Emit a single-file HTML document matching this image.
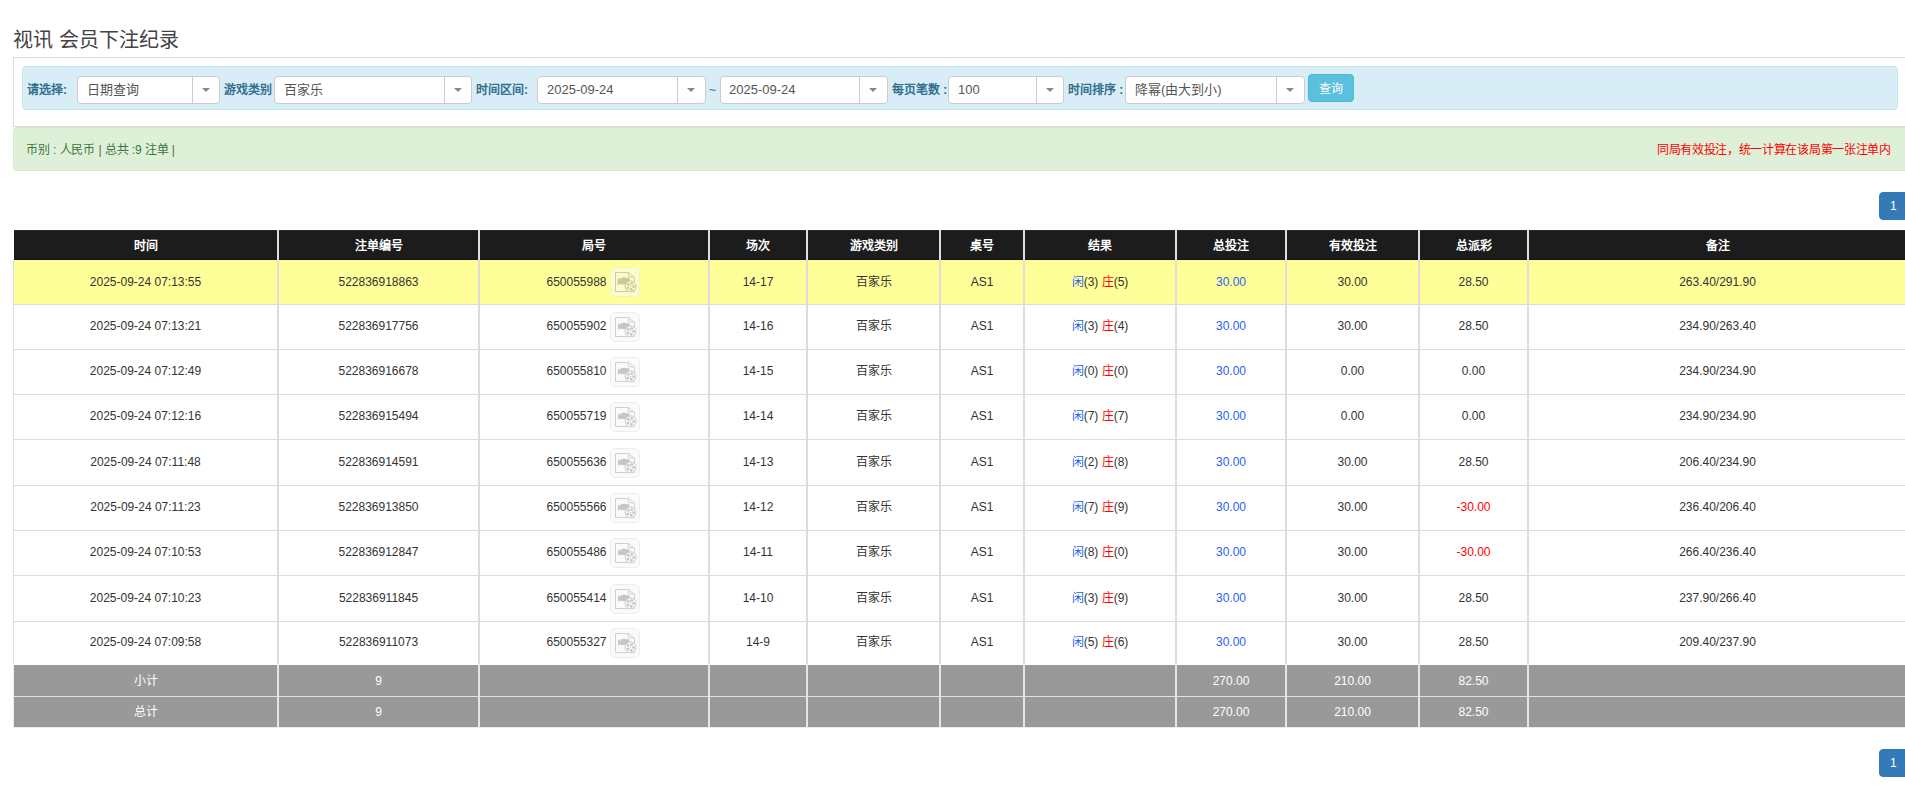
<!DOCTYPE html>
<html lang="zh-CN"><head><meta charset="utf-8"><title>视讯 会员下注纪录</title>
<style>
*{box-sizing:border-box;margin:0;padding:0}
html,body{width:1905px;height:805px;overflow:hidden;background:#fff}
body{font-family:"Liberation Sans",sans-serif;color:#333;font-size:12px;position:relative}
.title{position:absolute;left:13px;top:27px;font-size:20px;line-height:26px;color:#444;white-space:nowrap}
.outer{position:absolute;left:13px;top:57px;width:1910px;height:70px;border:1px solid #ddd}
.info{position:absolute;left:22px;top:66px;width:1876px;height:44px;background:#d9edf7;border:1px solid #bce8f1;border-radius:4px}
.lbl{position:absolute;top:81px;font-size:12px;line-height:18px;font-weight:bold;color:#31708f;white-space:nowrap}
.sel{position:absolute;top:76px;height:28px;background:#fff;border:1px solid #ccc;border-radius:4px}
.st{position:absolute;left:9px;top:4px;font-size:13px;line-height:18px;color:#555;white-space:nowrap}
.sep{position:absolute;top:0;bottom:0;width:1px;background:#ccc}
.arr{position:absolute;top:11px;width:0;height:0;border-left:4px solid transparent;border-right:4px solid transparent;border-top:4px solid #888}
.btn{position:absolute;left:1308px;top:74px;width:46px;height:28px;background:#5bc0de;border:1px solid #46b8da;border-radius:4px;color:#fff;font-size:12px;line-height:28px;text-align:center}
.alert{position:absolute;left:13px;top:127px;width:1910px;height:44px;background:#dff0d8;border:1px solid #d6e9c6;border-radius:4px}
.al{position:absolute;left:26px;top:142px;font-size:12px;letter-spacing:-0.1px;line-height:16px;color:#3c763d;white-space:nowrap}
.ar{position:absolute;right:15px;top:142px;font-size:12px;letter-spacing:-0.32px;line-height:16px;color:#f00;white-space:nowrap}
.pg{position:absolute;left:1879px;width:30px;height:28px;background:#337ab7;border:1px solid #337ab7;border-radius:4px;color:#fff;font-weight:normal;font-size:12px;line-height:26px;padding-left:10px}
table{position:absolute;left:13px;top:230px;border-collapse:separate;border-spacing:0;table-layout:fixed;width:1894px}
th,td{text-align:center;border-left:1px solid #ddd;border-right:1px solid #ddd;white-space:nowrap;padding:0}
th{background:#1c1c1c;color:#fff;font-weight:bold;height:30px;font-size:12px;line-height:14px;padding-top:2px;border-left-color:#ddd;border-right-color:#ddd}
th:first-child{border-left-color:#fff}
th{box-shadow:inset 0 1px 0 #292929,inset 0 -1px 0 #121216}
td{border-bottom:1px solid #ddd;font-size:12px;color:#333;line-height:14px}
tr.hl td{background:#ffff99}
tbody tr:not(.hl):not(.sum) td{padding-bottom:2px}
.blue{color:#1f5ff5}
.red{color:#f00}
.jw{display:inline-flex;align-items:center;vertical-align:middle;position:relative;left:-1px}
.ico{display:block;margin-left:3px;position:relative;top:1px}
tr.hl .ico{top:0}
.bx{fill:#fafafa;stroke:#ededed}
.ig path{stroke:#d0d0d0}
.ig .cam,.ig g.cam circle{fill:#c6c6c6;stroke:none}
.rl{fill:#f9f9f9;stroke:#cdcdcd}
tr.hl .bx{fill:#fbfbd0;stroke:#f4f3bd}
tr.hl .ig path{stroke:#cfcd9c}
tr.hl .ig .cam,tr.hl .ig g.cam circle{fill:#c9c896}
tr.hl .rl{fill:#fafacd;stroke:#cccb98}
.cj{}
tr.sum td{background:#999;color:#fff;font-weight:normal;border-bottom:1px solid #e2e2e2;border-left-color:#e5e5e5;border-right-color:#e5e5e5}
tr.sum.last td{border-bottom-color:#ececec}
tr.sum td:first-child{border-left-color:#eee}
tr.r9 td{border-bottom-color:#fff}
</style></head><body>
<div class="title">视讯 会员下注纪录</div>
<div class="outer"></div>
<div class="info"></div>
<div class="lbl" style="left:27px">请选择:</div>
<div class="sel" style="left:77px;width:143px"><span class="st" style="left:9px">日期查询</span><span class="sep" style="left:114px"></span><span class="arr" style="left:124px"></span></div>
<div class="lbl" style="left:224px">游戏类别</div>
<div class="sel" style="left:274px;width:198px"><span class="st" style="left:9px">百家乐</span><span class="sep" style="left:169px"></span><span class="arr" style="left:179px"></span></div>
<div class="lbl" style="left:476px">时间区间:</div>
<div class="sel" style="left:537px;width:169px"><span class="st" style="left:9px">2025-09-24</span><span class="sep" style="left:139px"></span><span class="arr" style="left:149px"></span></div>
<div class="lbl" style="left:709px;font-weight:normal;color:#31708f">~</div>
<div class="sel" style="left:720px;width:168px"><span class="st" style="left:8px">2025-09-24</span><span class="sep" style="left:138px"></span><span class="arr" style="left:148px"></span></div>
<div class="lbl" style="left:892px">每页笔数 :</div>
<div class="sel" style="left:948px;width:116px"><span class="st" style="left:9px">100</span><span class="sep" style="left:87px"></span><span class="arr" style="left:97px"></span></div>
<div class="lbl" style="left:1068px">时间排序 :</div>
<div class="sel" style="left:1125px;width:180px"><span class="st" style="left:9px">降幂(由大到小)</span><span class="sep" style="left:150px"></span><span class="arr" style="left:160px"></span></div>
<div class="btn">查询</div>
<div class="alert"></div>
<div class="al">币别 : 人民币 | 总共 :9 注单 |</div>
<div class="ar" style="right:auto;left:1657px">同局有效投注，统一计算在该局第一张注单内</div>
<div class="pg" style="top:192px">1</div>
<table>
<colgroup><col style="width:265px"><col style="width:201px"><col style="width:230px"><col style="width:98px"><col style="width:133px"><col style="width:84px"><col style="width:152px"><col style="width:110px"><col style="width:133px"><col style="width:109px"><col style="width:379px"></colgroup>
<thead><tr><th>时间</th><th>注单编号</th><th>局号</th><th>场次</th><th>游戏类别</th><th>桌号</th><th>结果</th><th>总投注</th><th>有效投注</th><th>总派彩</th><th>备注</th></tr></thead>
<tbody>
<tr class="hl" style="height:45px"><td>2025-09-24 07:13:55</td><td>522836918863</td><td class="jh"><span class="jw"><span>650055988</span><svg class="ico" width="30" height="30" viewBox="0 0 30 30"><rect class="bx" x="0.5" y="0.5" width="29" height="29" rx="4.5"/><g class="ig"><path d="M5.5 5.5H18.3L24.5 10.5V24.5H5.5Z" fill="none" stroke-width="1"/><path d="M18.3 5.5V9.8H24.5" fill="none" stroke-width="1"/><path class="cam" d="M8 11.6L10.4 13V11.3H12.2L12.7 10.7H15.2L15.7 11.3H19.4V17H10.4V15.9L8 17.8Z"/><circle class="rl" cx="20.6" cy="19.4" r="5.5" stroke-width="1"/><g class="cam"><circle cx="18.23" cy="17.41" r="1.4"/><circle cx="21.76" cy="16.53" r="1.4"/><circle cx="23.69" cy="19.62" r="1.4"/><circle cx="21.35" cy="22.41" r="1.4"/><circle cx="17.97" cy="21.04" r="1.4"/><circle cx="20.4" cy="19.4" r="0.7"/></g></g></svg></span></td><td>14-17</td><td><span class="cj">百家乐</span></td><td>AS1</td><td><span class="blue">闲</span>(3) <span class="red">庄</span>(5)</td><td class="blue">30.00</td><td>30.00</td><td>28.50</td><td>263.40/291.90</td></tr>
<tr style="height:45px"><td>2025-09-24 07:13:21</td><td>522836917756</td><td class="jh"><span class="jw"><span>650055902</span><svg class="ico" width="30" height="30" viewBox="0 0 30 30"><rect class="bx" x="0.5" y="0.5" width="29" height="29" rx="4.5"/><g class="ig"><path d="M5.5 5.5H18.3L24.5 10.5V24.5H5.5Z" fill="none" stroke-width="1"/><path d="M18.3 5.5V9.8H24.5" fill="none" stroke-width="1"/><path class="cam" d="M8 11.6L10.4 13V11.3H12.2L12.7 10.7H15.2L15.7 11.3H19.4V17H10.4V15.9L8 17.8Z"/><circle class="rl" cx="20.6" cy="19.4" r="5.5" stroke-width="1"/><g class="cam"><circle cx="18.23" cy="17.41" r="1.4"/><circle cx="21.76" cy="16.53" r="1.4"/><circle cx="23.69" cy="19.62" r="1.4"/><circle cx="21.35" cy="22.41" r="1.4"/><circle cx="17.97" cy="21.04" r="1.4"/><circle cx="20.4" cy="19.4" r="0.7"/></g></g></svg></span></td><td>14-16</td><td><span class="cj">百家乐</span></td><td>AS1</td><td><span class="blue">闲</span>(3) <span class="red">庄</span>(4)</td><td class="blue">30.00</td><td>30.00</td><td>28.50</td><td>234.90/263.40</td></tr>
<tr style="height:45px"><td>2025-09-24 07:12:49</td><td>522836916678</td><td class="jh"><span class="jw"><span>650055810</span><svg class="ico" width="30" height="30" viewBox="0 0 30 30"><rect class="bx" x="0.5" y="0.5" width="29" height="29" rx="4.5"/><g class="ig"><path d="M5.5 5.5H18.3L24.5 10.5V24.5H5.5Z" fill="none" stroke-width="1"/><path d="M18.3 5.5V9.8H24.5" fill="none" stroke-width="1"/><path class="cam" d="M8 11.6L10.4 13V11.3H12.2L12.7 10.7H15.2L15.7 11.3H19.4V17H10.4V15.9L8 17.8Z"/><circle class="rl" cx="20.6" cy="19.4" r="5.5" stroke-width="1"/><g class="cam"><circle cx="18.23" cy="17.41" r="1.4"/><circle cx="21.76" cy="16.53" r="1.4"/><circle cx="23.69" cy="19.62" r="1.4"/><circle cx="21.35" cy="22.41" r="1.4"/><circle cx="17.97" cy="21.04" r="1.4"/><circle cx="20.4" cy="19.4" r="0.7"/></g></g></svg></span></td><td>14-15</td><td><span class="cj">百家乐</span></td><td>AS1</td><td><span class="blue">闲</span>(0) <span class="red">庄</span>(0)</td><td class="blue">30.00</td><td>0.00</td><td>0.00</td><td>234.90/234.90</td></tr>
<tr style="height:45px"><td>2025-09-24 07:12:16</td><td>522836915494</td><td class="jh"><span class="jw"><span>650055719</span><svg class="ico" width="30" height="30" viewBox="0 0 30 30"><rect class="bx" x="0.5" y="0.5" width="29" height="29" rx="4.5"/><g class="ig"><path d="M5.5 5.5H18.3L24.5 10.5V24.5H5.5Z" fill="none" stroke-width="1"/><path d="M18.3 5.5V9.8H24.5" fill="none" stroke-width="1"/><path class="cam" d="M8 11.6L10.4 13V11.3H12.2L12.7 10.7H15.2L15.7 11.3H19.4V17H10.4V15.9L8 17.8Z"/><circle class="rl" cx="20.6" cy="19.4" r="5.5" stroke-width="1"/><g class="cam"><circle cx="18.23" cy="17.41" r="1.4"/><circle cx="21.76" cy="16.53" r="1.4"/><circle cx="23.69" cy="19.62" r="1.4"/><circle cx="21.35" cy="22.41" r="1.4"/><circle cx="17.97" cy="21.04" r="1.4"/><circle cx="20.4" cy="19.4" r="0.7"/></g></g></svg></span></td><td>14-14</td><td><span class="cj">百家乐</span></td><td>AS1</td><td><span class="blue">闲</span>(7) <span class="red">庄</span>(7)</td><td class="blue">30.00</td><td>0.00</td><td>0.00</td><td>234.90/234.90</td></tr>
<tr style="height:46px"><td>2025-09-24 07:11:48</td><td>522836914591</td><td class="jh"><span class="jw"><span>650055636</span><svg class="ico" width="30" height="30" viewBox="0 0 30 30"><rect class="bx" x="0.5" y="0.5" width="29" height="29" rx="4.5"/><g class="ig"><path d="M5.5 5.5H18.3L24.5 10.5V24.5H5.5Z" fill="none" stroke-width="1"/><path d="M18.3 5.5V9.8H24.5" fill="none" stroke-width="1"/><path class="cam" d="M8 11.6L10.4 13V11.3H12.2L12.7 10.7H15.2L15.7 11.3H19.4V17H10.4V15.9L8 17.8Z"/><circle class="rl" cx="20.6" cy="19.4" r="5.5" stroke-width="1"/><g class="cam"><circle cx="18.23" cy="17.41" r="1.4"/><circle cx="21.76" cy="16.53" r="1.4"/><circle cx="23.69" cy="19.62" r="1.4"/><circle cx="21.35" cy="22.41" r="1.4"/><circle cx="17.97" cy="21.04" r="1.4"/><circle cx="20.4" cy="19.4" r="0.7"/></g></g></svg></span></td><td>14-13</td><td><span class="cj">百家乐</span></td><td>AS1</td><td><span class="blue">闲</span>(2) <span class="red">庄</span>(8)</td><td class="blue">30.00</td><td>30.00</td><td>28.50</td><td>206.40/234.90</td></tr>
<tr style="height:45px"><td>2025-09-24 07:11:23</td><td>522836913850</td><td class="jh"><span class="jw"><span>650055566</span><svg class="ico" width="30" height="30" viewBox="0 0 30 30"><rect class="bx" x="0.5" y="0.5" width="29" height="29" rx="4.5"/><g class="ig"><path d="M5.5 5.5H18.3L24.5 10.5V24.5H5.5Z" fill="none" stroke-width="1"/><path d="M18.3 5.5V9.8H24.5" fill="none" stroke-width="1"/><path class="cam" d="M8 11.6L10.4 13V11.3H12.2L12.7 10.7H15.2L15.7 11.3H19.4V17H10.4V15.9L8 17.8Z"/><circle class="rl" cx="20.6" cy="19.4" r="5.5" stroke-width="1"/><g class="cam"><circle cx="18.23" cy="17.41" r="1.4"/><circle cx="21.76" cy="16.53" r="1.4"/><circle cx="23.69" cy="19.62" r="1.4"/><circle cx="21.35" cy="22.41" r="1.4"/><circle cx="17.97" cy="21.04" r="1.4"/><circle cx="20.4" cy="19.4" r="0.7"/></g></g></svg></span></td><td>14-12</td><td><span class="cj">百家乐</span></td><td>AS1</td><td><span class="blue">闲</span>(7) <span class="red">庄</span>(9)</td><td class="blue">30.00</td><td>30.00</td><td class="red">-30.00</td><td>236.40/206.40</td></tr>
<tr style="height:45px"><td>2025-09-24 07:10:53</td><td>522836912847</td><td class="jh"><span class="jw"><span>650055486</span><svg class="ico" width="30" height="30" viewBox="0 0 30 30"><rect class="bx" x="0.5" y="0.5" width="29" height="29" rx="4.5"/><g class="ig"><path d="M5.5 5.5H18.3L24.5 10.5V24.5H5.5Z" fill="none" stroke-width="1"/><path d="M18.3 5.5V9.8H24.5" fill="none" stroke-width="1"/><path class="cam" d="M8 11.6L10.4 13V11.3H12.2L12.7 10.7H15.2L15.7 11.3H19.4V17H10.4V15.9L8 17.8Z"/><circle class="rl" cx="20.6" cy="19.4" r="5.5" stroke-width="1"/><g class="cam"><circle cx="18.23" cy="17.41" r="1.4"/><circle cx="21.76" cy="16.53" r="1.4"/><circle cx="23.69" cy="19.62" r="1.4"/><circle cx="21.35" cy="22.41" r="1.4"/><circle cx="17.97" cy="21.04" r="1.4"/><circle cx="20.4" cy="19.4" r="0.7"/></g></g></svg></span></td><td>14-11</td><td><span class="cj">百家乐</span></td><td>AS1</td><td><span class="blue">闲</span>(8) <span class="red">庄</span>(0)</td><td class="blue">30.00</td><td>30.00</td><td class="red">-30.00</td><td>266.40/236.40</td></tr>
<tr style="height:46px"><td>2025-09-24 07:10:23</td><td>522836911845</td><td class="jh"><span class="jw"><span>650055414</span><svg class="ico" width="30" height="30" viewBox="0 0 30 30"><rect class="bx" x="0.5" y="0.5" width="29" height="29" rx="4.5"/><g class="ig"><path d="M5.5 5.5H18.3L24.5 10.5V24.5H5.5Z" fill="none" stroke-width="1"/><path d="M18.3 5.5V9.8H24.5" fill="none" stroke-width="1"/><path class="cam" d="M8 11.6L10.4 13V11.3H12.2L12.7 10.7H15.2L15.7 11.3H19.4V17H10.4V15.9L8 17.8Z"/><circle class="rl" cx="20.6" cy="19.4" r="5.5" stroke-width="1"/><g class="cam"><circle cx="18.23" cy="17.41" r="1.4"/><circle cx="21.76" cy="16.53" r="1.4"/><circle cx="23.69" cy="19.62" r="1.4"/><circle cx="21.35" cy="22.41" r="1.4"/><circle cx="17.97" cy="21.04" r="1.4"/><circle cx="20.4" cy="19.4" r="0.7"/></g></g></svg></span></td><td>14-10</td><td><span class="cj">百家乐</span></td><td>AS1</td><td><span class="blue">闲</span>(3) <span class="red">庄</span>(9)</td><td class="blue">30.00</td><td>30.00</td><td>28.50</td><td>237.90/266.40</td></tr>
<tr class="r9" style="height:43px"><td>2025-09-24 07:09:58</td><td>522836911073</td><td class="jh"><span class="jw"><span>650055327</span><svg class="ico" width="30" height="30" viewBox="0 0 30 30"><rect class="bx" x="0.5" y="0.5" width="29" height="29" rx="4.5"/><g class="ig"><path d="M5.5 5.5H18.3L24.5 10.5V24.5H5.5Z" fill="none" stroke-width="1"/><path d="M18.3 5.5V9.8H24.5" fill="none" stroke-width="1"/><path class="cam" d="M8 11.6L10.4 13V11.3H12.2L12.7 10.7H15.2L15.7 11.3H19.4V17H10.4V15.9L8 17.8Z"/><circle class="rl" cx="20.6" cy="19.4" r="5.5" stroke-width="1"/><g class="cam"><circle cx="18.23" cy="17.41" r="1.4"/><circle cx="21.76" cy="16.53" r="1.4"/><circle cx="23.69" cy="19.62" r="1.4"/><circle cx="21.35" cy="22.41" r="1.4"/><circle cx="17.97" cy="21.04" r="1.4"/><circle cx="20.4" cy="19.4" r="0.7"/></g></g></svg></span></td><td>14-9</td><td><span class="cj">百家乐</span></td><td>AS1</td><td><span class="blue">闲</span>(5) <span class="red">庄</span>(6)</td><td class="blue">30.00</td><td>30.00</td><td>28.50</td><td>209.40/237.90</td></tr>
<tr class="sum" style="height:32px"><td>小计</td><td>9</td><td></td><td></td><td></td><td></td><td></td><td>270.00</td><td>210.00</td><td>82.50</td><td></td></tr>
<tr class="sum last" style="height:31px"><td>总计</td><td>9</td><td></td><td></td><td></td><td></td><td></td><td>270.00</td><td>210.00</td><td>82.50</td><td></td></tr>
</tbody></table>
<div class="pg" style="top:749px">1</div>
</body></html>
